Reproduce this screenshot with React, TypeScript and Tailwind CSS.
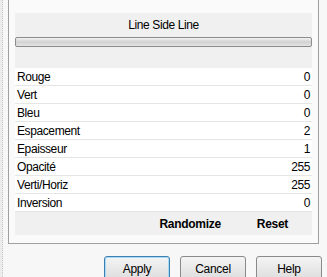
const rows: [string, string][] = [
  ["Rouge", "0"],
  ["Vert", "0"],
  ["Bleu", "0"],
  ["Espacement", "2"],
  ["Epaisseur", "1"],
  ["Opacité", "255"],
  ["Verti/Horiz", "255"],
  ["Inversion", "0"],
];

function DlgButton({ label, focused }: { label: string; focused?: boolean }) {
  return (
    <div
      className={
        "flex h-[26px] w-[66px] shrink-0 items-center justify-center rounded-[3px] border bg-gradient-to-b from-[#f4f4f4] to-[#dcdcdc] text-[12px] tracking-[-0.3px] text-black " +
        (focused ? "border-[#3c7fb1] shadow-[inset_0_0_0_1px_#a6dbf5]" : "border-[#8a8a8a]")
      }
    >
      {label}
    </div>
  );
}

export default function App() {
  return (
    <div
      className="relative flex h-[277px] w-[327px] overflow-hidden bg-[#f7f7f7] text-black"
      style={{ fontFamily: '"Liberation Sans", Arial, sans-serif' }}
    >
      <div className="h-full w-[3px] shrink-0 border-r border-dotted border-[#c8c8c8] bg-[#ececec]"></div>
      <div className="flex flex-1 flex-col">
        <div className="ml-[5px] mr-[8px] flex h-[244px] shrink-0 flex-col border-b border-l border-r border-[#a0a0a0] bg-[#fafafa] px-[6px] pt-[13px]">
          <div className="flex h-[222px] shrink-0 flex-col bg-[#f0f0f0]">
            <div className="flex h-[24px] shrink-0 items-center justify-center text-[12px] tracking-[-0.4px]">Line Side Line</div>
            <div className="h-[10px] shrink-0 rounded-[2px] border border-[#8c8c8c] bg-gradient-to-b from-[#f2f2f2] via-[#d2d2d2] to-[#e4e4e4]"></div>
            <div className="h-[21px] shrink-0"></div>
            <div className="flex shrink-0 flex-col">
              {rows.map(([name, value]) => (
                <div
                  key={name}
                  className="flex h-[18px] items-center justify-between border-b border-[#e6e6e6] bg-white pl-[2px] pr-[2px] text-[12px] tracking-[-0.4px]"
                >
                  <span>{name}</span>
                  <span>{value}</span>
                </div>
              ))}
            </div>
            <div className="flex flex-1 items-center justify-end gap-[36px] pr-[24px] text-[12px] font-bold tracking-[-0.3px]">
              <span>Randomize</span>
              <span>Reset</span>
            </div>
          </div>
        </div>
        <div className="mt-[12px] flex shrink-0 justify-end gap-[10px] pr-[5px]">
          <DlgButton label="Apply" focused />
          <DlgButton label="Cancel" />
          <DlgButton label="Help" />
        </div>
      </div>
    </div>
  );
}
